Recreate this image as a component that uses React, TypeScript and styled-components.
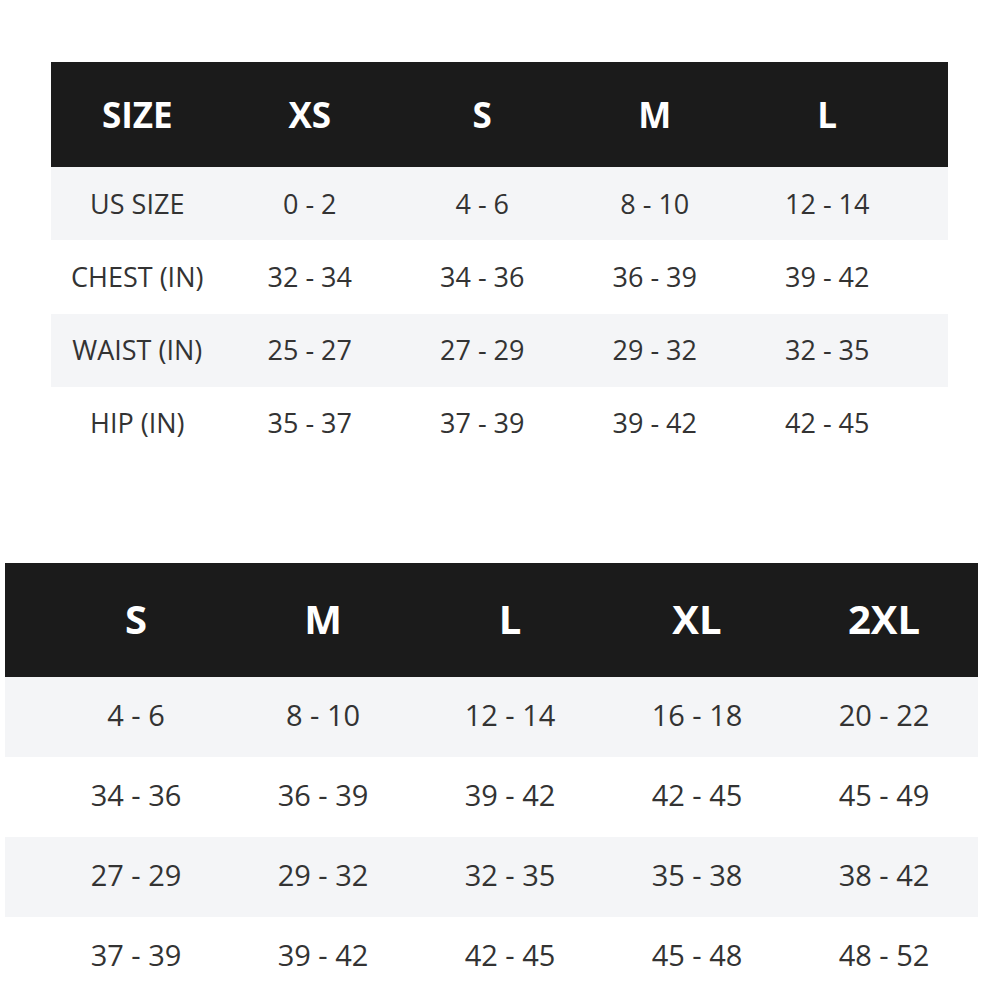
import React from "react";
import styled, { createGlobalStyle } from "styled-components";

const Global = createGlobalStyle`
  html, body { margin: 0; padding: 0; background: #ffffff; }
  body { font-family: "Open Sans", "Noto Sans", sans-serif; color: #333333; }
`;

const Page = styled.div`
  width: 1000px;
  height: 1000px;
  overflow: hidden;
  display: flex;
  flex-direction: column;
  padding-top: 62px;
  box-sizing: border-box;
  gap: 103px;
`;

const Table = styled.div<{ $left: number; $width: number; $padL: number; $col: number }>`
  margin-left: ${(p) => p.$left}px;
  width: ${(p) => p.$width}px;
  box-sizing: border-box;
  display: flex;
  flex-direction: column;
  --col: ${(p) => p.$col}px;
  --padl: ${(p) => p.$padL}px;
`;

const Row = styled.div<{ $h: number; $bg: string }>`
  display: grid;
  grid-template-columns: repeat(5, var(--col));
  padding-left: var(--padl);
  height: ${(p) => p.$h}px;
  background: ${(p) => p.$bg};
  align-items: center;
`;

const HeadCell = styled.div<{ $size: number; $lift: number }>`
  color: #ffffff;
  font-weight: 700;
  font-size: ${(p) => p.$size}px;
  text-align: center;
  line-height: 1;
  padding-bottom: ${(p) => p.$lift}px;
`;

const Cell = styled.div<{ $size: number; $lift: number }>`
  color: #333333;
  font-weight: 400;
  font-size: ${(p) => p.$size}px;
  text-align: center;
  line-height: 1;
  padding-bottom: ${(p) => p.$lift}px;
`;

const t1Head = ["SIZE", "XS", "S", "M", "L"];
const t1Rows = [
  ["US SIZE", "0 - 2", "4 - 6", "8 - 10", "12 - 14"],
  ["CHEST (IN)", "32 - 34", "34 - 36", "36 - 39", "39 - 42"],
  ["WAIST (IN)", "25 - 27", "27 - 29", "29 - 32", "32 - 35"],
  ["HIP (IN)", "35 - 37", "37 - 39", "39 - 42", "42 - 45"],
];

const t2Head = ["S", "M", "L", "XL", "2XL"];
const t2Rows = [
  ["4 - 6", "8 - 10", "12 - 14", "16 - 18", "20 - 22"],
  ["34 - 36", "36 - 39", "39 - 42", "42 - 45", "45 - 49"],
  ["27 - 29", "29 - 32", "32 - 35", "35 - 38", "38 - 42"],
  ["37 - 39", "39 - 42", "42 - 45", "45 - 48", "48 - 52"],
];

const HEAD_BG = "#1b1b1b";
const STRIPE = "#f4f5f7";

export default function App() {
  return (
    <>
      <Global />
      <Page>
        <Table $left={51} $width={897} $padL={0} $col={172.5}>
          <Row $h={105} $bg={HEAD_BG}>
            {t1Head.map((h) => (
              <HeadCell key={h} $size={35} $lift={0}>{h}</HeadCell>
            ))}
          </Row>
          {t1Rows.map((r, i) => (
            <Row key={i} $h={73.25} $bg={i % 2 === 0 ? STRIPE : "#ffffff"}>
              {r.map((c, j) => (
                <Cell key={j} $size={27} $lift={1}>{c}</Cell>
              ))}
            </Row>
          ))}
        </Table>
        <Table $left={5} $width={973} $padL={37.5} $col={187}>
          <Row $h={114} $bg={HEAD_BG}>
            {t2Head.map((h) => (
              <HeadCell key={h} $size={40} $lift={2}>{h}</HeadCell>
            ))}
          </Row>
          {t2Rows.map((r, i) => (
            <Row key={i} $h={80} $bg={i % 2 === 0 ? STRIPE : "#ffffff"}>
              {r.map((c, j) => (
                <Cell key={j} $size={29} $lift={5}>{c}</Cell>
              ))}
            </Row>
          ))}
        </Table>
      </Page>
    </>
  );
}
